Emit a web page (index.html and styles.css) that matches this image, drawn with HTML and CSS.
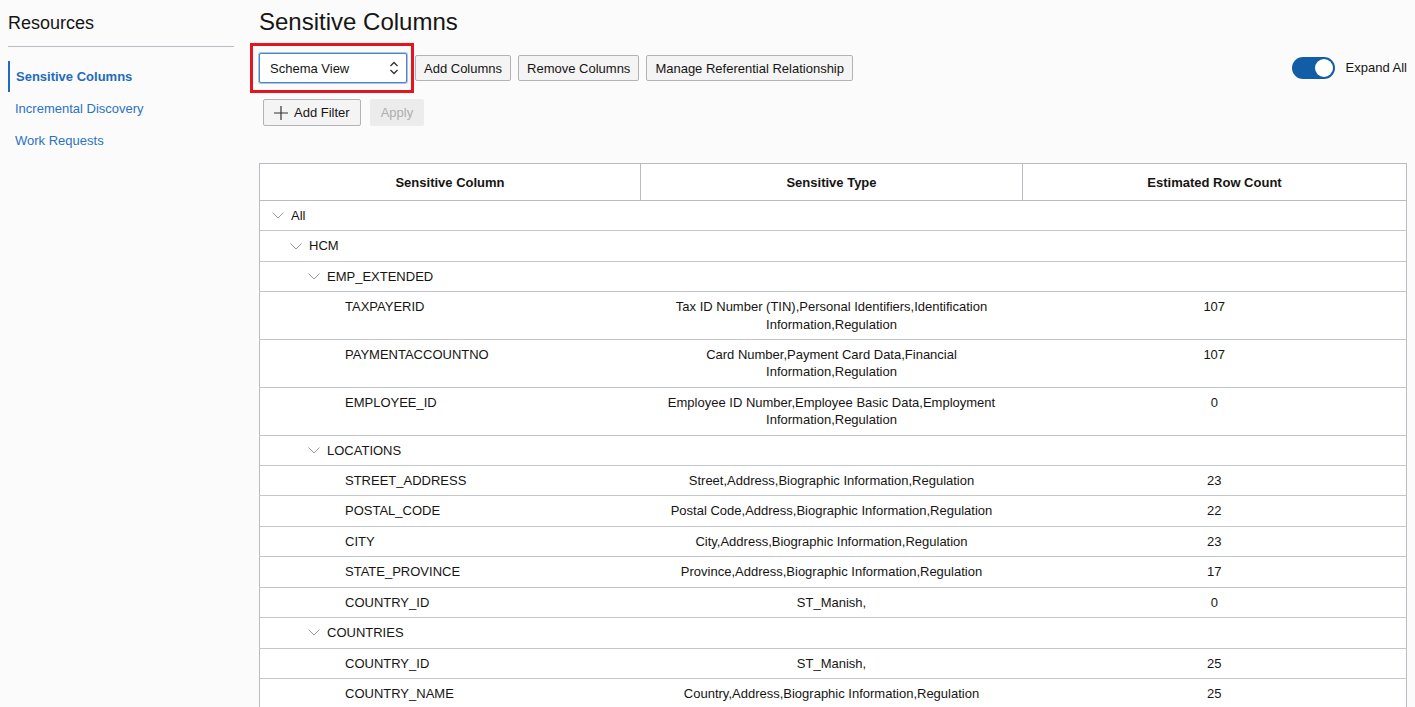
FILE: index.html
```html
<!DOCTYPE html>
<html lang="en">
<head>
<meta charset="utf-8">
<title>Sensitive Columns</title>
<link rel="stylesheet" href="styles.css">
</head>
<body>
<div class="page">
  <aside class="sidebar">
    <h2 class="side-title">Resources</h2>
    <nav class="side-nav">
      <a class="nav-item active">Sensitive Columns</a>
      <a class="nav-item">Incremental Discovery</a>
      <a class="nav-item">Work Requests</a>
    </nav>
  </aside>
  <main class="main">
    <h1 class="title">Sensitive Columns</h1>
    <div class="toolbar">
      <div class="select-wrap">
        <div class="select">
          <span>Schema View</span>
          <svg class="updown" width="10" height="16" viewBox="0 0 10 16"><polyline points="1.5,6 5,2.5 8.5,6" fill="none" stroke="#333" stroke-width="1.3"/><polyline points="1.5,10 5,13.5 8.5,10" fill="none" stroke="#333" stroke-width="1.3"/></svg>
        </div>
        <div class="highlight"></div>
      </div>
      <button class="btn">Add Columns</button>
      <button class="btn">Remove Columns</button>
      <button class="btn">Manage Referential Relationship</button>
      <div class="spacer"></div>
      <div class="toggle-wrap">
        <span class="toggle"><span class="knob"></span></span>
        <span class="toggle-label">Expand All</span>
      </div>
    </div>
    <div class="filter-row">
      <button class="btn btn-filter"><svg width="16" height="16" viewBox="0 0 16 16"><path d="M8 1v14M1 8h14" stroke="#333" stroke-width="1.2" fill="none"/></svg>Add Filter</button>
      <button class="btn btn-disabled">Apply</button>
    </div>
    <div class="table-wrap">
      <table class="grid">
        <colgroup><col class="c1"><col class="c2"><col class="c3"></colgroup>
        <thead>
          <tr><th>Sensitive Column</th><th>Sensitive Type</th><th>Estimated Row Count</th></tr>
        </thead>
        <tbody>
          <tr class="group"><td colspan="3"><div class="tree l0"><svg class="chev" width="12" height="7" viewBox="0 0 12 7"><polyline points="0.5,0.5 6,6 11.5,0.5" fill="none" stroke="#9a9a9a" stroke-width="1"/></svg>All</div></td></tr>
          <tr class="group"><td colspan="3"><div class="tree l1"><svg class="chev" width="12" height="7" viewBox="0 0 12 7"><polyline points="0.5,0.5 6,6 11.5,0.5" fill="none" stroke="#9a9a9a" stroke-width="1"/></svg>HCM</div></td></tr>
          <tr class="group"><td colspan="3"><div class="tree l2"><svg class="chev" width="12" height="7" viewBox="0 0 12 7"><polyline points="0.5,0.5 6,6 11.5,0.5" fill="none" stroke="#9a9a9a" stroke-width="1"/></svg>EMP_EXTENDED</div></td></tr>
          <tr><td class="leaf">TAXPAYERID</td><td class="type">Tax ID Number (TIN),Personal Identifiers,Identification Information,Regulation</td><td class="num">107</td></tr>
          <tr><td class="leaf">PAYMENTACCOUNTNO</td><td class="type">Card Number,Payment Card Data,Financial Information,Regulation</td><td class="num">107</td></tr>
          <tr><td class="leaf">EMPLOYEE_ID</td><td class="type">Employee ID Number,Employee Basic Data,Employment Information,Regulation</td><td class="num">0</td></tr>
          <tr class="group"><td colspan="3"><div class="tree l2"><svg class="chev" width="12" height="7" viewBox="0 0 12 7"><polyline points="0.5,0.5 6,6 11.5,0.5" fill="none" stroke="#9a9a9a" stroke-width="1"/></svg>LOCATIONS</div></td></tr>
          <tr><td class="leaf">STREET_ADDRESS</td><td class="type">Street,Address,Biographic Information,Regulation</td><td class="num">23</td></tr>
          <tr><td class="leaf">POSTAL_CODE</td><td class="type">Postal Code,Address,Biographic Information,Regulation</td><td class="num">22</td></tr>
          <tr><td class="leaf">CITY</td><td class="type">City,Address,Biographic Information,Regulation</td><td class="num">23</td></tr>
          <tr><td class="leaf">STATE_PROVINCE</td><td class="type">Province,Address,Biographic Information,Regulation</td><td class="num">17</td></tr>
          <tr><td class="leaf">COUNTRY_ID</td><td class="type">ST_Manish,</td><td class="num">0</td></tr>
          <tr class="group"><td colspan="3"><div class="tree l2"><svg class="chev" width="12" height="7" viewBox="0 0 12 7"><polyline points="0.5,0.5 6,6 11.5,0.5" fill="none" stroke="#9a9a9a" stroke-width="1"/></svg>COUNTRIES</div></td></tr>
          <tr><td class="leaf">COUNTRY_ID</td><td class="type">ST_Manish,</td><td class="num">25</td></tr>
          <tr><td class="leaf">COUNTRY_NAME</td><td class="type">Country,Address,Biographic Information,Regulation</td><td class="num">25</td></tr>
        </tbody>
      </table>
    </div>
  </main>
</div>
</body>
</html>
```

FILE: styles.css
```css
* { box-sizing: border-box; }
html, body { margin: 0; padding: 0; }
body {
  background: #fbfbfb;
  font-family: "Liberation Sans", Arial, sans-serif;
  font-size: 13px;
  color: #161513;
  overflow: hidden;
  height: 707px;
}
.page {
  display: flex;
  align-items: flex-start;
}
.sidebar {
  width: 234px;
  padding-left: 8px;
  flex: none;
}
.side-title {
  margin: 0;
  padding-top: 12px;
  font-size: 18px;
  font-weight: normal;
  line-height: 22px;
  padding-bottom: 12px;
  border-bottom: 1px solid #b9bcc2;
}
.side-nav {
  display: flex;
  flex-direction: column;
  padding-top: 14px;
}
.nav-item {
  display: block;
  height: 32px;
  line-height: 31px;
  padding-left: 5px;
  color: #2b72c6;
  font-size: 13px;
  border-left: 2px solid transparent;
}
.nav-item.active {
  font-weight: bold;
  color: #1f6bbd;
  border-left-color: #1f6bbd;
  padding-left: 6px;
  height: 31px;
  margin-bottom: 1px;
}
.main {
  flex: 1;
  padding-left: 25px;
  padding-right: 9px;
}
.title {
  margin: 0;
  padding-top: 7px;
  font-size: 24px;
  font-weight: normal;
  line-height: 30px;
}
.toolbar {
  display: flex;
  align-items: center;
  margin-top: 16px;
  height: 30px;
}
.select-wrap {
  position: relative;
  margin-right: 8px;
}
.select {
  width: 148px;
  height: 30px;
  border: 1px solid #4b84c9;
  border-radius: 2px;
  background: #fff;
  box-shadow: 0 0 0 1px #a9c4e6;
  display: flex;
  align-items: center;
  justify-content: space-between;
  padding: 0 7px 0 10px;
  font-size: 13px;
}
.updown { display: block; }
.highlight {
  position: absolute;
  left: -9px;
  top: -10px;
  right: -7px;
  bottom: -10px;
  border: 3px solid #e3151f;
  pointer-events: none;
}
.btn {
  font-family: inherit;
  font-size: 13px;
  color: #161513;
  height: 26px;
  padding: 0 8px;
  border: 1px solid #b1b3b6;
  border-radius: 2px;
  background: #f4f4f4;
  margin-right: 7px;
  display: inline-flex;
  align-items: center;
  cursor: pointer;
}
.spacer { flex: 1; }
.toggle-wrap {
  display: flex;
  align-items: center;
  gap: 11px;
}
.toggle {
  width: 43px;
  height: 22px;
  border-radius: 11px;
  background: #135da8;
  position: relative;
  display: inline-block;
}
.knob {
  position: absolute;
  right: 2px;
  top: 2px;
  width: 18px;
  height: 18px;
  border-radius: 50%;
  background: #fff;
}
.toggle-label {
  font-size: 13px;
  margin-top: -2px;
}
.filter-row {
  display: flex;
  align-items: center;
  margin-top: 16px;
  padding-left: 4px;
}
.btn-filter {
  height: 27px;
  gap: 5px;
  padding: 0 10px 0 9px;
  margin-right: 9px;
}
.btn-filter svg { display: block; }
.btn-disabled {
  height: 27px;
  background: #ececec;
  border-color: #ececec;
  color: #aeaeae;
  padding: 0 10px;
}
.table-wrap {
  margin-top: 37px;
}
.grid {
  width: 1147px;
  border-collapse: collapse;
  background: #fff;
  table-layout: fixed;
  border: 1px solid #b9bdc3;
}
.c1 { width: 381px; }
.c2 { width: 382px; }
.c3 { width: 384px; }
.grid th {
  height: 37px;
  font-weight: bold;
  font-size: 13px;
  text-align: center;
  border: 1px solid #b9bdc3;
  padding: 0 8px;
}
.grid td {
  border-top: 1px solid #c3c6cb;
  padding: 6px 8px;
  line-height: 17.4px;
  vertical-align: top;
}
.tree {
  display: flex;
  align-items: center;
}
.chev {
  display: block;
  margin-right: 7px;
  flex: none;
}
.l0 { padding-left: 4px; }
.l1 { padding-left: 22px; }
.l2 { padding-left: 40px; }
.grid td.leaf { padding-left: 85px; }
.grid td.type { text-align: center; padding: 6px 8px; }
.grid td.num { text-align: center; }
```
